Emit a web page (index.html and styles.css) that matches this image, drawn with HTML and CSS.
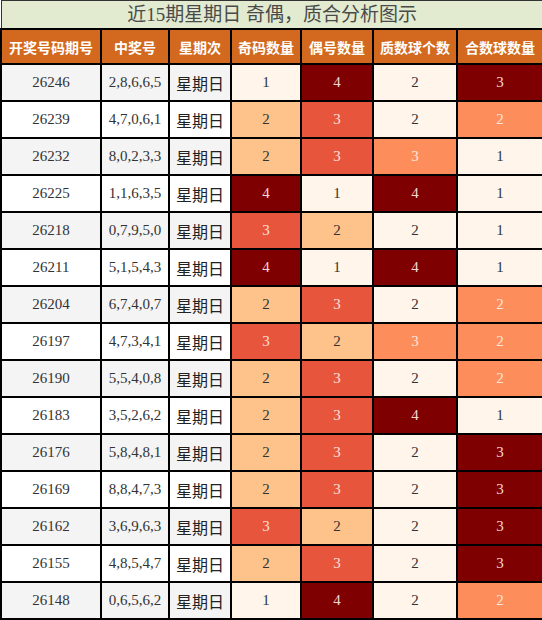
FILE: index.html
```html
<!DOCTYPE html>
<html lang="zh">
<head>
<meta charset="utf-8">
<link rel="stylesheet" href="styles.css">
</head>
<body>
<table class="grid">
<colgroup>
<col class="c1"><col class="c2"><col class="c3"><col class="c4"><col class="c5"><col class="c6"><col class="c7">
</colgroup>
<thead>
<tr><th colspan="7" class="title">近15期星期日 奇偶，质合分析图示</th></tr>
<tr class="head">
<th>开奖号码期号</th><th>中奖号</th><th>星期次</th><th>奇码数量</th><th>偶号数量</th><th>质数球个数</th><th>合数球数量</th>
</tr>
</thead>
<tbody>
<tr class="odd"><td>26246</td><td>2,8,6,6,5</td><td class="day">星期日</td><td class="v1">1</td><td class="v4">4</td><td class="v1">2</td><td class="v4">3</td></tr>
<tr><td>26239</td><td>4,7,0,6,1</td><td class="day">星期日</td><td class="v2">2</td><td class="v3">3</td><td class="v1">2</td><td class="vo">2</td></tr>
<tr class="odd"><td>26232</td><td>8,0,2,3,3</td><td class="day">星期日</td><td class="v2">2</td><td class="v3">3</td><td class="vo">3</td><td class="v1">1</td></tr>
<tr><td>26225</td><td>1,1,6,3,5</td><td class="day">星期日</td><td class="v4">4</td><td class="v1">1</td><td class="v4">4</td><td class="v1">1</td></tr>
<tr class="odd"><td>26218</td><td>0,7,9,5,0</td><td class="day">星期日</td><td class="v3">3</td><td class="v2">2</td><td class="v1">2</td><td class="v1">1</td></tr>
<tr><td>26211</td><td>5,1,5,4,3</td><td class="day">星期日</td><td class="v4">4</td><td class="v1">1</td><td class="v4">4</td><td class="v1">1</td></tr>
<tr class="odd"><td>26204</td><td>6,7,4,0,7</td><td class="day">星期日</td><td class="v2">2</td><td class="v3">3</td><td class="v1">2</td><td class="vo">2</td></tr>
<tr><td>26197</td><td>4,7,3,4,1</td><td class="day">星期日</td><td class="v3">3</td><td class="v2">2</td><td class="vo">3</td><td class="vo">2</td></tr>
<tr class="odd"><td>26190</td><td>5,5,4,0,8</td><td class="day">星期日</td><td class="v2">2</td><td class="v3">3</td><td class="v1">2</td><td class="vo">2</td></tr>
<tr><td>26183</td><td>3,5,2,6,2</td><td class="day">星期日</td><td class="v2">2</td><td class="v3">3</td><td class="v4">4</td><td class="v1">1</td></tr>
<tr class="odd"><td>26176</td><td>5,8,4,8,1</td><td class="day">星期日</td><td class="v2">2</td><td class="v3">3</td><td class="v1">2</td><td class="v4">3</td></tr>
<tr><td>26169</td><td>8,8,4,7,3</td><td class="day">星期日</td><td class="v2">2</td><td class="v3">3</td><td class="v1">2</td><td class="v4">3</td></tr>
<tr class="odd"><td>26162</td><td>3,6,9,6,3</td><td class="day">星期日</td><td class="v3">3</td><td class="v2">2</td><td class="v1">2</td><td class="v4">3</td></tr>
<tr><td>26155</td><td>4,8,5,4,7</td><td class="day">星期日</td><td class="v2">2</td><td class="v3">3</td><td class="v1">2</td><td class="v4">3</td></tr>
<tr class="odd"><td>26148</td><td>0,6,5,6,2</td><td class="day">星期日</td><td class="v1">1</td><td class="v4">4</td><td class="v1">2</td><td class="vo">2</td></tr>
</tbody>
</table>
</body>
</html>
```
FILE: styles.css
```css
html, body {
  margin: 0;
  padding: 0;
  background: #ffffff;
}
.grid {
  width: 542px;
  border-collapse: collapse;
  table-layout: fixed;
  font-family: "Liberation Serif", "Noto Sans CJK SC", serif;
  color: #333333;
}
.c1 { width: 100px; }
.c2 { width: 68px; }
.c3 { width: 62px; }
.c4 { width: 70px; }
.c5 { width: 72px; }
.c6 { width: 84px; }
.c7 { width: 86px; }
.grid th, .grid td {
  border: 2px solid #000;
  padding: 0;
  text-align: center;
}
.title {
  height: 27px;
  background: #e2ebcf;
  color: #4a4a4a;
  font-weight: normal;
  font-size: 19px;
  font-family: "Liberation Serif", "Noto Sans CJK SC", sans-serif;
  border: 1px solid #333 !important;
  line-height: 26px;
}
.head th {
  height: 33px;
  background: #d2691e;
  color: #ffffff;
  font-weight: bold;
  font-family: "Noto Sans CJK SC", sans-serif;
  font-size: 14px;
}
.grid td {
  height: 35px;
  font-size: 15px;
  background: #ffffff;
}
.grid tr.odd td { background: #f4f4f4; }
.grid td.day {
  font-family: "Noto Sans CJK SC", sans-serif;
  font-size: 16px;
  color: #222;
}
.grid tr td.v1 { background: #fff5eb; color: #333; }
.grid tr td.v2 { background: #fdc38b; color: #333; }
.grid tr td.v3 { background: #e8553d; color: #fde0d8; }
.grid tr td.vo { background: #fd8e5c; color: #fde6dc; }
.grid tr td.v4 { background: #7f0000; color: #f4d8d8; }
```
